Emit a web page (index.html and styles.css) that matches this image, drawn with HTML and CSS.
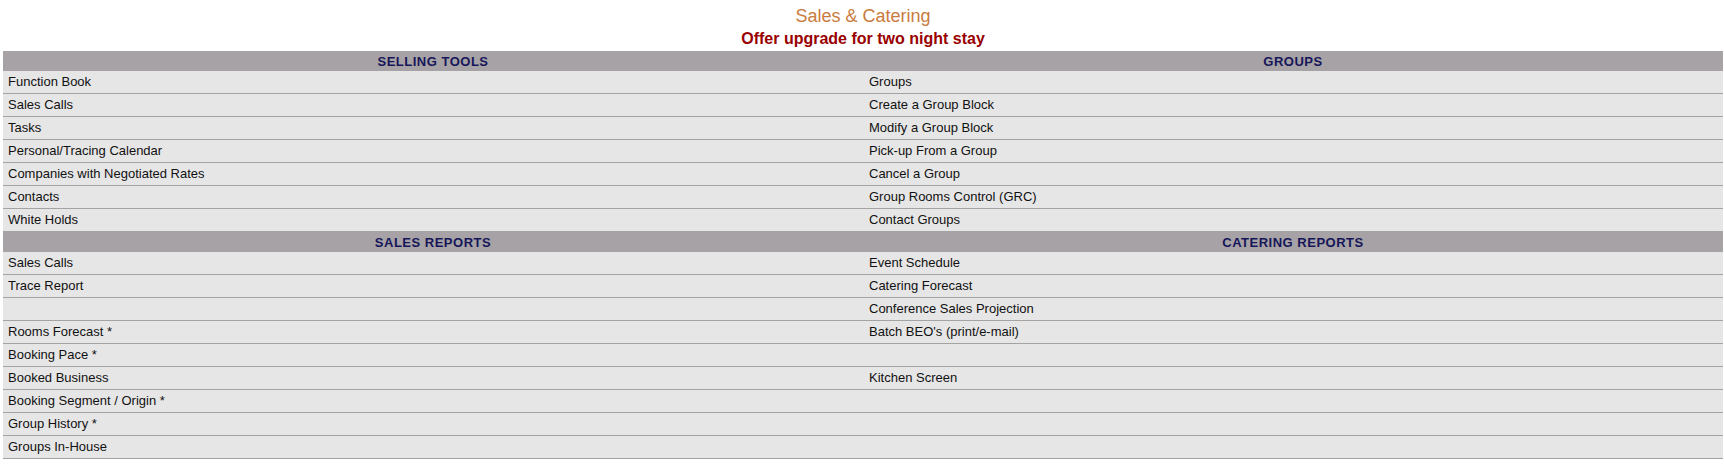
FILE: index.html
```html
<!DOCTYPE html>
<html>
<head>
<meta charset="utf-8">
<title>Sales &amp; Catering</title>
<link rel="stylesheet" href="styles.css">
</head>
<body>
<div class="page">
  <h1 class="title">Sales &amp; Catering</h1>
  <h2 class="subtitle">Offer upgrade for two night stay</h2>
  <div class="menu">
    <div class="head">SELLING TOOLS</div><div class="head">GROUPS</div>
    <div class="cell">Function Book</div><div class="cell r">Groups</div>
    <div class="cell">Sales Calls</div><div class="cell r">Create a Group Block</div>
    <div class="cell">Tasks</div><div class="cell r">Modify a Group Block</div>
    <div class="cell">Personal/Tracing Calendar</div><div class="cell r">Pick-up From a Group</div>
    <div class="cell">Companies with Negotiated Rates</div><div class="cell r">Cancel a Group</div>
    <div class="cell">Contacts</div><div class="cell r">Group Rooms Control (GRC)</div>
    <div class="cell">White Holds</div><div class="cell r">Contact Groups</div>
    <div class="head">SALES REPORTS</div><div class="head">CATERING REPORTS</div>
    <div class="cell">Sales Calls</div><div class="cell r">Event Schedule</div>
    <div class="cell">Trace Report</div><div class="cell r">Catering Forecast</div>
    <div class="cell"></div><div class="cell r">Conference Sales Projection</div>
    <div class="cell">Rooms Forecast *</div><div class="cell r">Batch BEO's (print/e-mail)</div>
    <div class="cell">Booking Pace *</div><div class="cell r"></div>
    <div class="cell">Booked Business</div><div class="cell r">Kitchen Screen</div>
    <div class="cell">Booking Segment / Origin *</div><div class="cell r"></div>
    <div class="cell">Group History *</div><div class="cell r"></div>
    <div class="cell">Groups In-House</div><div class="cell r"></div>
  </div>
</div>
</body>
</html>
```

FILE: styles.css
```css
html, body {
  margin: 0;
  padding: 0;
  background: #ffffff;
}
body {
  font-family: "Liberation Sans", Arial, sans-serif;
}
.page {
  padding: 4px 1px 0 3px;
}
.title {
  margin: 0;
  text-align: center;
  font-size: 18px;
  line-height: 24px;
  font-weight: normal;
  color: #c97b40;
}
.subtitle {
  margin: 0;
  text-align: center;
  font-size: 16px;
  line-height: 22px;
  font-weight: bold;
  color: #990000;
}
.menu {
  margin-top: 1px;
  display: grid;
  grid-template-columns: 1fr 1fr;
}
.head {
  height: 18px;
  padding-top: 2px;
  line-height: 18px;
  background: #a7a2a5;
  color: #16165a;
  font-size: 13px;
  font-weight: bold;
  letter-spacing: 0.5px;
  text-align: center;
}
.cell {
  height: 22px;
  line-height: 22px;
  padding-left: 5px;
  background: #e6e6e6;
  border-bottom: 1px solid #a3a3a3;
  font-size: 13px;
  color: #111111;
  white-space: nowrap;
}
.cell.r {
  padding-left: 6px;
}
```
